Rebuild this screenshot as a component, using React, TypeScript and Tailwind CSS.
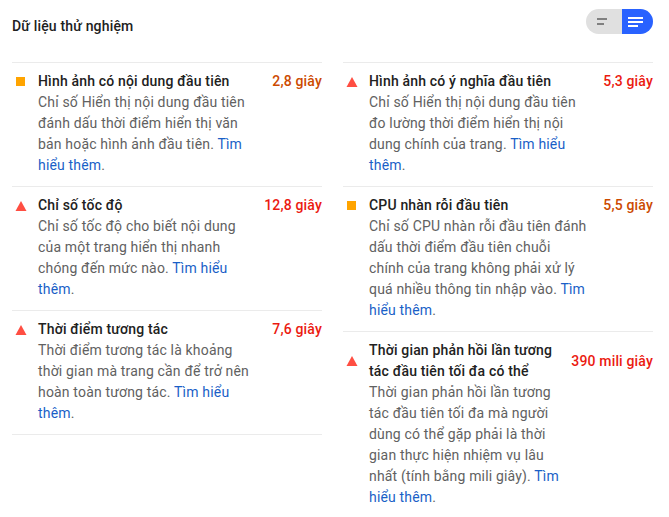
import React from 'react'

type Metric = {
    title: string
    desc: string
    value: string
    level: 'average' | 'fail'
}

const leftMetrics: Metric[] = [
    {
        title: "Hình ảnh có nội dung đầu tiên",
        desc: "Chỉ số Hiển thị nội dung đầu tiên đánh dấu thời điểm hiển thị văn bản hoặc hình ảnh đầu tiên.",
        value: "2,8 giây",
        level: 'average',
    },
    {
        title: "Chỉ số tốc độ",
        desc: "Chỉ số tốc độ cho biết nội dung của một trang hiển thị nhanh chóng đến mức nào.",
        value: "12,8 giây",
        level: 'fail',
    },
    {
        title: "Thời điểm tương tác",
        desc: "Thời điểm tương tác là khoảng thời gian mà trang cần để trở nên hoàn toàn tương tác.",
        value: "7,6 giây",
        level: 'fail',
    },
]

const rightMetrics: Metric[] = [
    {
        title: "Hình ảnh có ý nghĩa đầu tiên",
        desc: "Chỉ số Hiển thị nội dung đầu tiên đo lường thời điểm hiển thị nội dung chính của trang.",
        value: "5,3 giây",
        level: 'fail',
    },
    {
        title: "CPU nhàn rỗi đầu tiên",
        desc: "Chỉ số CPU nhàn rỗi đầu tiên đánh dấu thời điểm đầu tiên chuỗi chính của trang không phải xử lý quá nhiều thông tin nhập vào.",
        value: "5,5 giây",
        level: 'average',
    },
    {
        title: "Thời gian phản hồi lần tương tác đầu tiên tối đa có thể",
        desc: "Thời gian phản hồi lần tương tác đầu tiên tối đa mà người dùng có thể gặp phải là thời gian thực hiện nhiệm vụ lâu nhất (tính bằng mili giây).",
        value: "390 mili giây",
        level: 'fail',
    },
]

const ScoreIcon = ({ level }: { level: Metric['level'] }) =>
    level === 'average' ? (
        <div className="w-[9px] h-[9px] bg-[#ffa400] ml-1" />
    ) : (
        <svg width="12" height="10" viewBox="0 0 12 10" className="ml-[3px]">
            <polygon points="6,0 11.5,10 0.5,10" fill="#ff4e42" />
        </svg>
    )

const MetricRow = ({ metric, last }: { metric: Metric; last: boolean }) => (
    <div className={`border-t border-[#ebebeb] pt-2 pb-[10px] ${last ? 'border-b' : ''}`}>
        <div className="grid grid-cols-[26px_10fr_3fr] items-center">
            <ScoreIcon level={metric.level} />
            <div className="font-medium text-[#212121]">{metric.title}</div>
            <div
                className={`text-right font-medium whitespace-nowrap ${metric.level === 'average' ? 'text-[#cc4a00]' : 'text-[#eb1a10]'}`}>
                {metric.value}
            </div>
            <div className="col-start-2 col-end-3 text-[#616161]">
                {metric.desc}{' '}
                <a className="text-[#1a5fc7]">Tìm hiểu thêm</a>.
            </div>
        </div>
    </div>
)

const App = () => {
    return (
        <div
            className="w-[669px] h-[517px] overflow-hidden bg-white pl-3 pr-4 text-[14px] leading-[21px] tracking-[0.17px]"
            style={{ fontFamily: 'Roboto, "Noto Sans", sans-serif' }}>
            <div className="flex justify-between pt-[9px] h-[62px] items-start">
                <div className="font-medium text-[#212121] mt-[7px]">Dữ liệu thử nghiệm</div>
                <div className="flex h-[25px] w-[67px] rounded-full overflow-hidden">
                    <div className="flex-1 bg-[#e0e0e0] flex flex-col items-start justify-center gap-[3px] pl-[11px]">
                        <div className="h-[2px] w-[10px] bg-[#808080]" />
                        <div className="h-[2px] w-[7px] bg-[#808080]" />
                    </div>
                    <div className="flex-1 bg-[#2962ff] flex flex-col items-start justify-center gap-[2px] pl-[6px]">
                        <div className="h-[2px] w-[15px] bg-white" />
                        <div className="h-[2px] w-[15px] bg-white" />
                        <div className="h-[2px] w-[10px] bg-white" />
                    </div>
                </div>
            </div>
            <div className="grid grid-cols-2 gap-x-[21px]">
                <div>
                    {leftMetrics.map((m, i) => (
                        <MetricRow key={m.title} metric={m} last={i === leftMetrics.length - 1} />
                    ))}
                </div>
                <div>
                    {rightMetrics.map((m, i) => (
                        <MetricRow key={m.title} metric={m} last={i === rightMetrics.length - 1} />
                    ))}
                </div>
            </div>
        </div>
    )
}

export default App
